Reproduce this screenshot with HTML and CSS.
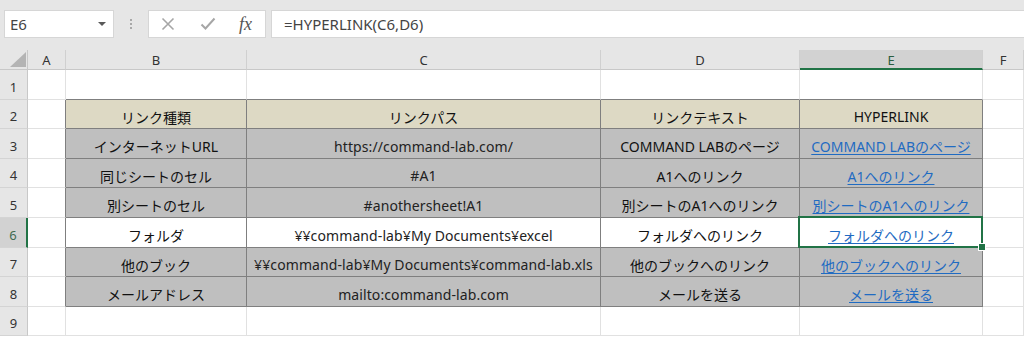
FILE: index.html
```html
<!DOCTYPE html>
<html lang="ja">
<head>
<meta charset="utf-8">
<link rel="stylesheet" href="styles.css">
</head>
<body>
<div class="app">
  <div class="toolbar">
    <div class="namebox">
      <span class="nb-text">E6</span>
      <svg class="nb-arrow" width="10" height="6" viewBox="0 0 10 6"><path d="M1 1h8L5 5z" fill="#595959"/></svg>
    </div>
    <div class="grip"><span></span><span></span><span></span></div>
    <div class="fbtns">
      <svg width="16" height="16" viewBox="0 0 16 16"><path d="M2.5 2.5l11 11M13.5 2.5l-11 11" stroke="#a6a6a6" stroke-width="1.6" fill="none"/></svg>
      <svg width="16" height="16" viewBox="0 0 16 16"><path d="M1.5 8.5l4 4 9-10" stroke="#a6a6a6" stroke-width="2" fill="none"/></svg>
      <span class="fx">fx</span>
    </div>
    <div class="formula">=HYPERLINK(C6,D6)</div>
  </div>

  <div class="sheet">
    <div class="corner"><svg width="28" height="20" viewBox="0 0 28 20"><path d="M10 17H26V2z" fill="#b4b4b4"/></svg></div>
    <div class="ch">A</div>
    <div class="ch">B</div>
    <div class="ch">C</div>
    <div class="ch">D</div>
    <div class="ch sel">E</div>
    <div class="ch">F</div>

    <div class="rh">1</div>
    <div class="c tr0"></div>
    <div class="c tb"></div>
    <div class="c tb"></div>
    <div class="c tb"></div>
    <div class="c tb"></div>
    <div class="c"></div>

    <div class="rh">2</div>
    <div class="c tr"></div>
    <div class="c t head">リンク種類</div>
    <div class="c t head">リンクパス</div>
    <div class="c t head">リンクテキスト</div>
    <div class="c t head">HYPERLINK</div>
    <div class="c"></div>

    <div class="rh">3</div>
    <div class="c tr"></div>
    <div class="c t g">インターネットURL</div>
    <div class="c t g path">https://command-lab.com/</div>
    <div class="c t g">COMMAND LABのページ</div>
    <div class="c t g"><span class="link">COMMAND LABのページ</span></div>
    <div class="c"></div>

    <div class="rh">4</div>
    <div class="c tr"></div>
    <div class="c t g">同じシートのセル</div>
    <div class="c t g path">#A1</div>
    <div class="c t g">A1へのリンク</div>
    <div class="c t g"><span class="link">A1へのリンク</span></div>
    <div class="c"></div>

    <div class="rh">5</div>
    <div class="c tr"></div>
    <div class="c t g">別シートのセル</div>
    <div class="c t g path">#anothersheet!A1</div>
    <div class="c t g">別シートのA1へのリンク</div>
    <div class="c t g"><span class="link">別シートのA1へのリンク</span></div>
    <div class="c"></div>

    <div class="rh rsel">6</div>
    <div class="c tr"></div>
    <div class="c t">フォルダ</div>
    <div class="c t path">¥¥command-lab¥My Documents¥excel</div>
    <div class="c t">フォルダへのリンク</div>
    <div class="c t active"><span class="link">フォルダへのリンク</span></div>
    <div class="c"></div>

    <div class="rh">7</div>
    <div class="c tr"></div>
    <div class="c t g">他のブック</div>
    <div class="c t g path">¥¥command-lab¥My Documents¥command-lab.xls</div>
    <div class="c t g">他のブックへのリンク</div>
    <div class="c t g"><span class="link">他のブックへのリンク</span></div>
    <div class="c"></div>

    <div class="rh">8</div>
    <div class="c tr"></div>
    <div class="c t g">メールアドレス</div>
    <div class="c t g path">mailto:command-lab.com</div>
    <div class="c t g">メールを送る</div>
    <div class="c t g"><span class="link">メールを送る</span></div>
    <div class="c"></div>

    <div class="rh">9</div>
    <div class="c"></div>
    <div class="c"></div>
    <div class="c"></div>
    <div class="c"></div>
    <div class="c"></div>
    <div class="c"></div>
  </div>
</div>
</body>
</html>
```

FILE: styles.css
```css
* { box-sizing: border-box; }
html, body { margin: 0; padding: 0; background: #fff; }
body {
  width: 1024px;
  height: 337px;
  overflow: hidden;
  font-family: "Noto Sans", "Noto Sans CJK JP", sans-serif;
  color: #111;
}

.toolbar {
  height: 50px;
  background: #e6e6e6;
  display: flex;
  align-items: flex-start;
  padding-top: 10px;
  padding-left: 4px;
}
.namebox {
  width: 110px;
  height: 28px;
  background: #fff;
  border: 1px solid #d6d6d6;
  display: flex;
  align-items: center;
  justify-content: space-between;
  padding: 0 6px 0 5px;
}
.nb-text { font-size: 15px; color: #444; font-family: "Noto Sans", sans-serif; }
.grip {
  width: 34px;
  height: 28px;
  display: flex;
  flex-direction: column;
  align-items: center;
  justify-content: center;
  gap: 2px;
}
.grip span { width: 2px; height: 2px; background: #a8a8a8; display: block; }
.fbtns {
  width: 118px;
  height: 28px;
  background: #fff;
  border: 1px solid #d6d6d6;
  display: flex;
  align-items: center;
  padding-left: 11px;
  gap: 24px;
}
.fx {
  font-family: "Liberation Serif", serif;
  font-style: italic;
  font-size: 18px;
  color: #555;
  margin-left: -1px;
}
.formula {
  flex: 1;
  margin-left: 5px;
  height: 28px;
  background: #fff;
  border: 1px solid #d6d6d6;
  border-right: none;
  font-size: 15px;
  color: #444;
  display: flex;
  align-items: center;
  padding-left: 12px;
  font-family: "Noto Sans", sans-serif;
}

.sheet {
  display: grid;
  grid-template-columns: 28px 38px 181px 354px 199px 183px 41px;
  grid-template-rows: 20px 30px 29px 30px 29px 30px 30px 29px 30px 29px;
}
.corner {
  background: #e6e6e6;
  border-right: 1px solid #c8c8c8;
  border-bottom: 1px solid #c8c8c8;
}
.corner svg { display: block; }
.ch {
  background: #e6e6e6;
  border-right: 1px solid #d0d0d0;
  border-bottom: 1px solid #c8c8c8;
  font-size: 13px;
  color: #333;
  display: flex;
  align-items: center;
  justify-content: center;
  padding-top: 1px;
}
.ch.sel {
  background: #d2d2d2;
  color: #2b5d3f;
  border-bottom: 2px solid #217346;
}
.rh {
  background: #e6e6e6;
  border-right: 1px solid #c8c8c8;
  border-bottom: 1px solid #d4d4d4;
  font-size: 13px;
  color: #333;
  display: flex;
  align-items: flex-end;
  justify-content: center;
  padding-bottom: 3px;
}
.rh.rsel {
  background: #d2d2d2;
  color: #3f6b51;
  border-right: 2px solid #217346;
}

.c {
  border-right: 1px solid #e1e1e1;
  border-bottom: 1px solid #e1e1e1;
  display: flex;
  align-items: center;
  justify-content: center;
  padding-top: 5px;
  font-size: 14px;
  white-space: nowrap;
  position: relative;
}
.c.tb { border-bottom-color: #7f7f7f; }
.c.tr { border-right-color: #7f7f7f; }
.c.t {
  border-right-color: #7f7f7f;
  border-bottom-color: #7f7f7f;
}
.c.head { background: #ddd9c4; }
.c.g { background: #bfbfbf; }
.c.path { font-size: 14px; letter-spacing: 0.1px; color: #222; }

.link {
  color: #1f6bc2;
  text-decoration: underline;
  text-underline-offset: 2px;
}

.c.active::after {
  content: "";
  position: absolute;
  left: -2px;
  top: -2px;
  right: -1px;
  bottom: -1px;
  border: 2px solid #217346;
}
.c.active::before {
  content: "";
  position: absolute;
  right: -4px;
  bottom: -4px;
  width: 6px;
  height: 6px;
  background: #217346;
  border: 1px solid #fff;
  z-index: 2;
}
```
